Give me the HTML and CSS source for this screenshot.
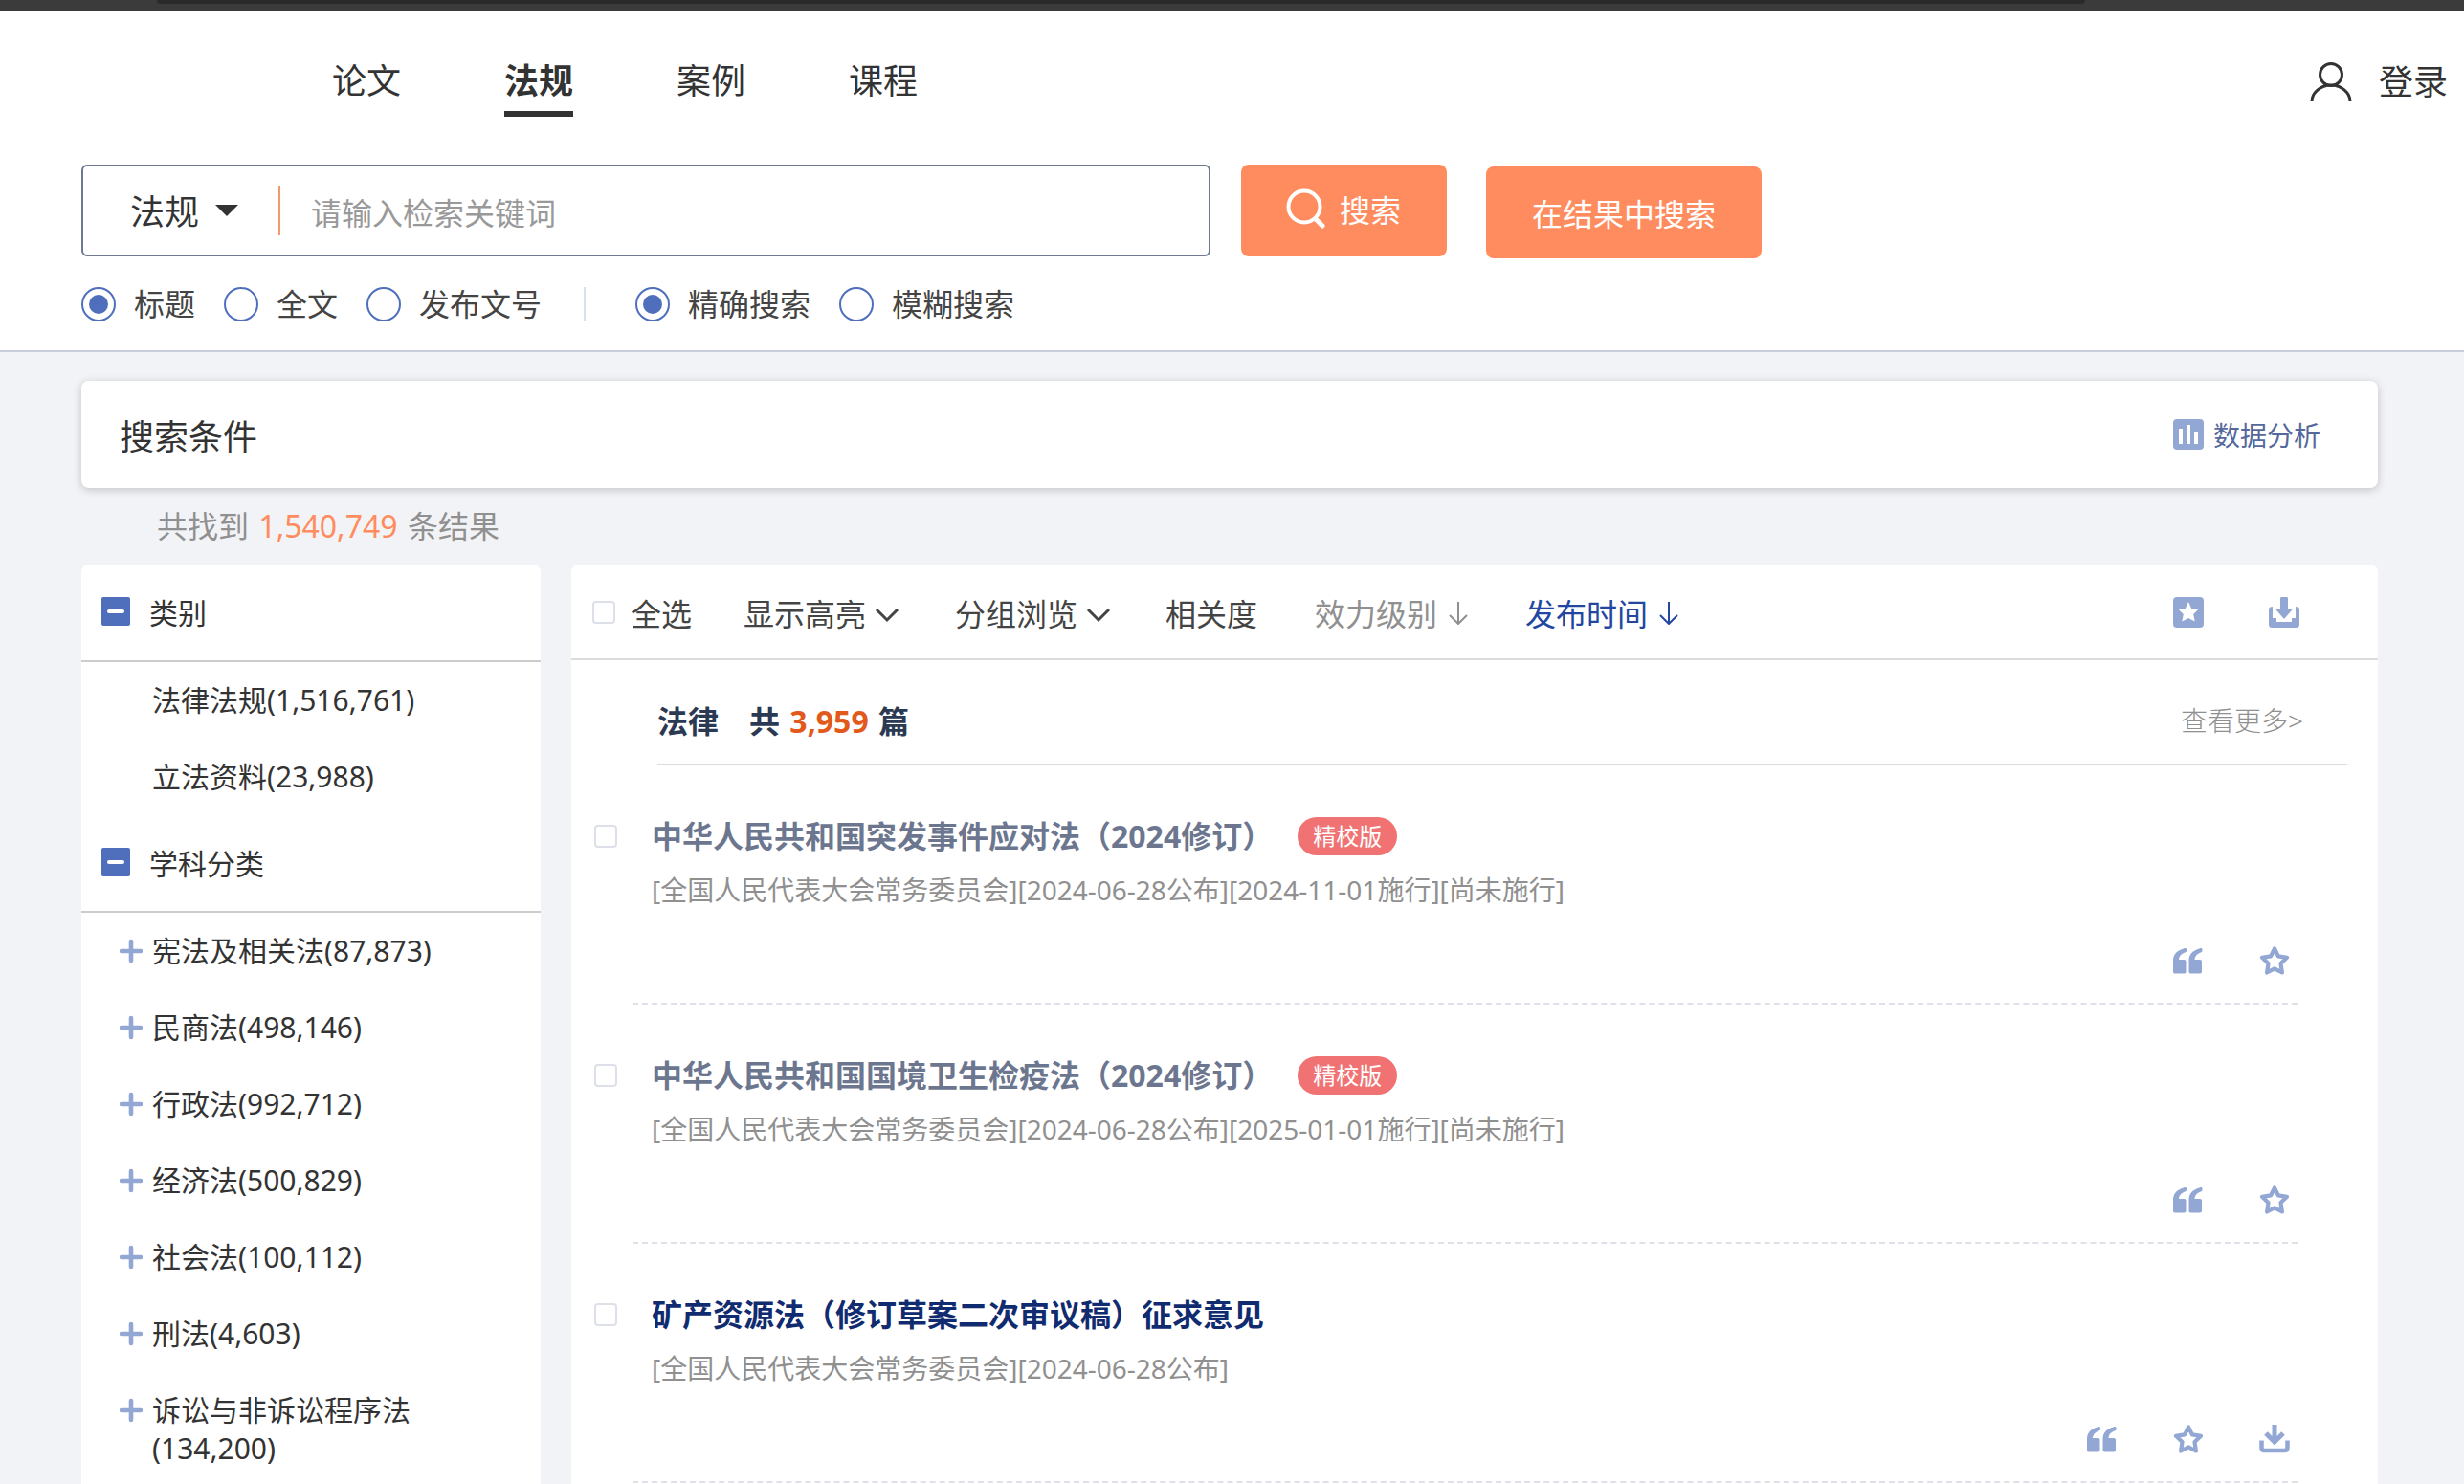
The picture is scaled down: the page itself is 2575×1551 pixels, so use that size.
FILE: index.html
```html
<!DOCTYPE html>
<html lang="zh-CN">
<head>
<meta charset="utf-8">
<meta name="viewport" content="width=device-width, initial-scale=1">
<title>法规</title>
<link rel="stylesheet" href="styles.css">
</head>
<body>
<svg class="sprite" aria-hidden="true">
  <symbol id="i-quote" viewBox="0 0 32 32"><path d="M11 3.500c2-1 3-.2 3 .8v1.200c0 1-.5 1.500-1.500 2C8.500 9 6.500 11 6 15h5.500c1.400 0 2 .7 2 2v10.500c0 1.300-.7 2-2 2H2c-1.300 0-2-.7-2-2V16C0 9.500 4 5.500 11 3.500zM27.500 3.500c2-1 3-.2 3 .8v1.200c0 1-.5 1.500-1.500 2C25 9 23 11 22.500 15H28c1.400 0 2 .7 2 2v10.500c0 1.300-.7 2-2 2h-9.500c-1.300 0-2-.7-2-2V16c0-6.500 4-10.500 11-12.500z"/></symbol>
  <symbol id="i-star" viewBox="0 0 32 32"><path d="M16 3.500l3.900 7.900 9.100 1.400-6.500 6.200 1.400 9.500-7.900-4.200-7.900 4.200 1.400-9.500L3 12.800l9.100-1.400z" fill="none" stroke="currentColor" stroke-width="4.200" stroke-linejoin="round"/></symbol>
  <symbol id="i-save" viewBox="0 0 32 32"><path d="M16 1v18M7 10l9 9 9-9" fill="none" stroke="currentColor" stroke-width="5"/><path d="M2.500 17.500V25c0 2 1 3 3 3h21c2 0 3-1 3-3v-7.500" fill="none" stroke="currentColor" stroke-width="4.500"/></symbol>
  <symbol id="i-plus" viewBox="0 0 24 24"><path d="M12 2v20M2 12h20" stroke="currentColor" stroke-width="4.600" stroke-linecap="round"/></symbol>
  <symbol id="i-minus" viewBox="0 0 30 30"><rect width="30" height="30" rx="2"/><path d="M8 15h14" stroke="#fff" stroke-width="4" stroke-linecap="round"/></symbol>
  <symbol id="i-chevron" viewBox="0 0 26 22"><path d="M2 8l11 11L24 8" fill="none" stroke="currentColor" stroke-width="3"/></symbol>
  <symbol id="i-arrow" viewBox="0 0 20 26"><path d="M10 2v23M1 16l9 9 9-9" fill="none" stroke="currentColor" stroke-width="2"/></symbol>
</svg>

<div class="window-edge"><div class="window-tab"></div></div>

<header class="header">
  <div class="topbar">
    <nav class="nav">
      <a class="nav-link" href="#">论文</a>
      <a class="nav-link active" href="#" aria-current="page">法规</a>
      <a class="nav-link" href="#">案例</a>
      <a class="nav-link" href="#">课程</a>
    </nav>
    <a class="login" href="#">
      <svg class="user-icon" viewBox="0 0 44 42" aria-hidden="true"><circle cx="22" cy="13" r="11.500" fill="none" stroke="currentColor" stroke-width="3"/><path d="M2 41c0-9 9-17 20-17s20 8 20 17" fill="none" stroke="currentColor" stroke-width="3"/></svg>
      登录
    </a>
  </div>

  <form class="search">
    <div class="search-row">
      <div class="search-box">
        <div class="picker">
          <select class="picker-select" aria-label="检索类型"><option>法规</option></select>
          <svg class="picker-caret" viewBox="0 0 24 12" aria-hidden="true"><path d="M0 0h24L12 12z"/></svg>
        </div>
        <input class="search-input" type="text" placeholder="请输入检索关键词" aria-label="检索关键词">
      </div>
      <button class="btn btn-search" type="submit">
        <svg class="search-icon" viewBox="0 0 42 42" aria-hidden="true"><circle cx="19" cy="19" r="16.500" fill="none" stroke="currentColor" stroke-width="4"/><path d="M32 33l6 6" stroke="currentColor" stroke-width="5" stroke-linecap="round"/></svg>
        搜索
      </button>
      <button class="btn btn-refine" type="button">在结果中搜索</button>
    </div>
    <div class="options">
      <label class="option"><input class="radio" type="radio" name="field" checked>标题</label>
      <label class="option"><input class="radio" type="radio" name="field">全文</label>
      <label class="option"><input class="radio" type="radio" name="field">发布文号</label>
      <span class="options-divider"></span>
      <label class="option"><input class="radio" type="radio" name="mode" checked>精确搜索</label>
      <label class="option"><input class="radio" type="radio" name="mode">模糊搜索</label>
    </div>
  </form>
</header>

<div class="page">
  <section class="conditions">
    <h1 class="conditions-title">搜索条件</h1>
    <a class="analysis" href="#">
      <svg class="icon" viewBox="0 0 32 32" aria-hidden="true"><rect width="32" height="32" rx="4"/><path d="M8 10v16M16 6v20M24 14v12" stroke="#fff" stroke-width="4"/></svg>
      数据分析
    </a>
  </section>

  <p class="summary">共找到 <span class="summary-count">1,540,749</span> 条结果</p>

  <div class="columns">
    <aside class="sidebar">
      <h2 class="facet-title"><svg class="minus" aria-hidden="true"><use href="#i-minus"/></svg>类别</h2>
      <ul class="facet-list">
        <li class="facet"><a class="facet-link" href="#">法律法规(1,516,761)</a></li>
        <li class="facet"><a class="facet-link" href="#">立法资料(23,988)</a></li>
      </ul>
      <h2 class="facet-title"><svg class="minus" aria-hidden="true"><use href="#i-minus"/></svg>学科分类</h2>
      <ul class="facet-list">
        <li class="facet"><svg class="plus" aria-hidden="true"><use href="#i-plus"/></svg><a class="facet-link" href="#">宪法及相关法(87,873)</a></li>
        <li class="facet"><svg class="plus" aria-hidden="true"><use href="#i-plus"/></svg><a class="facet-link" href="#">民商法(498,146)</a></li>
        <li class="facet"><svg class="plus" aria-hidden="true"><use href="#i-plus"/></svg><a class="facet-link" href="#">行政法(992,712)</a></li>
        <li class="facet"><svg class="plus" aria-hidden="true"><use href="#i-plus"/></svg><a class="facet-link" href="#">经济法(500,829)</a></li>
        <li class="facet"><svg class="plus" aria-hidden="true"><use href="#i-plus"/></svg><a class="facet-link" href="#">社会法(100,112)</a></li>
        <li class="facet"><svg class="plus" aria-hidden="true"><use href="#i-plus"/></svg><a class="facet-link" href="#">刑法(4,603)</a></li>
        <li class="facet"><svg class="plus" aria-hidden="true"><use href="#i-plus"/></svg><a class="facet-link" href="#">诉讼与非诉讼程序法<wbr>(134,200)</a></li>
      </ul>
    </aside>

    <main class="results">
      <div class="toolbar">
        <label class="select-all"><input class="check" type="checkbox">全选</label>
        <div class="tools">
          <button class="tool" type="button">显示高亮<svg class="chevron" aria-hidden="true"><use href="#i-chevron"/></svg></button>
          <button class="tool" type="button">分组浏览<svg class="chevron" aria-hidden="true"><use href="#i-chevron"/></svg></button>
        </div>
        <div class="sorts">
          <button class="tool" type="button">相关度</button>
          <button class="tool muted" type="button">效力级别<svg class="arrow" aria-hidden="true"><use href="#i-arrow"/></svg></button>
          <button class="tool current" type="button">发布时间<svg class="arrow" aria-hidden="true"><use href="#i-arrow"/></svg></button>
        </div>
        <div class="bulk">
          <button class="icon-btn" type="button" aria-label="批量收藏"><svg class="icon" viewBox="0 0 32 32"><rect width="32" height="32" rx="4"/><path d="M16 5l3.200 7 7.300.8-5.300 5.200 1.500 7.500-6.700-3.500-6.700 3.500 1.500-7.500-5.300-5.200 7.300-.8z" fill="#fff"/></svg></button>
          <button class="icon-btn" type="button" aria-label="批量下载"><svg class="icon" viewBox="0 0 32 32"><path d="M12 1.500C12 .5 12.500 0 13.500 0h5c1 0 1.500.5 1.500 1.500V12h5.500l-9 10.500h-1L6.500 12H12z"/><path d="M4 10v12h4v4h16v-4h4V10c2.500 0 4 1 4 3v15c0 3-1 4-4 4H4c-3 0-4-1-4-4V13c0-2 1.500-3 4-3z"/></svg></button>
        </div>
      </div>

      <div class="group-head">
        <h2 class="group-title"><span class="group-name">法律</span>共 <span class="group-count">3,959</span> 篇</h2>
        <a class="more" href="#">查看更多&gt;</a>
      </div>

      <article class="item">
        <input class="check" type="checkbox" aria-label="选择 突发事件应对法">
        <div class="item-body">
          <h3 class="item-title"><a class="item-link visited" href="#">中华人民共和国突发事件应对法（2024修订）</a><span class="badge">精校版</span></h3>
          <p class="item-meta">[全国人民代表大会常务委员会][2024-06-28公布][2024-11-01施行][尚未施行]</p>
          <div class="actions">
            <button class="icon-btn" type="button" aria-label="引用"><svg class="icon"><use href="#i-quote"/></svg></button>
            <button class="icon-btn" type="button" aria-label="收藏"><svg class="icon"><use href="#i-star"/></svg></button>
          </div>
        </div>
      </article>

      <article class="item">
        <input class="check" type="checkbox" aria-label="选择 国境卫生检疫法">
        <div class="item-body">
          <h3 class="item-title"><a class="item-link visited" href="#">中华人民共和国国境卫生检疫法（2024修订）</a><span class="badge">精校版</span></h3>
          <p class="item-meta">[全国人民代表大会常务委员会][2024-06-28公布][2025-01-01施行][尚未施行]</p>
          <div class="actions">
            <button class="icon-btn" type="button" aria-label="引用"><svg class="icon"><use href="#i-quote"/></svg></button>
            <button class="icon-btn" type="button" aria-label="收藏"><svg class="icon"><use href="#i-star"/></svg></button>
          </div>
        </div>
      </article>

      <article class="item">
        <input class="check" type="checkbox" aria-label="选择 矿产资源法">
        <div class="item-body">
          <h3 class="item-title"><a class="item-link" href="#">矿产资源法（修订草案二次审议稿）征求意见</a></h3>
          <p class="item-meta">[全国人民代表大会常务委员会][2024-06-28公布]</p>
          <div class="actions">
            <button class="icon-btn" type="button" aria-label="引用"><svg class="icon"><use href="#i-quote"/></svg></button>
            <button class="icon-btn" type="button" aria-label="收藏"><svg class="icon"><use href="#i-star"/></svg></button>
            <button class="icon-btn" type="button" aria-label="下载"><svg class="icon"><use href="#i-save"/></svg></button>
          </div>
        </div>
      </article>
    </main>
  </div>
</div>
</body>
</html>
```
FILE: styles.css
```css
* { box-sizing: border-box; }

body {
  margin: 0;
  background: #f2f3f6;
  color: #333;
  font-family: "Noto Sans", "Noto Sans CJK SC", sans-serif;
  font-size: 32px;
}

h1, h2, h3, p, ul { margin: 0; padding: 0; }
ul { list-style: none; }
a { color: inherit; text-decoration: none; }
button, input, select { font: inherit; color: inherit; }
button { border: 0; padding: 0; background: none; cursor: pointer; }
svg { display: block; flex: none; fill: currentColor; }

.sprite { display: none; }

/* Window edge above the page */
.window-edge {
  height: 12px;
  padding: 0 396px 0 164px;
  background: #3b3b3b;
}
.window-tab {
  height: 4px;
  border-radius: 0 0 6px 6px;
  background: #2a2a2a;
}

/* Header */
.header {
  background: #fff;
  border-bottom: 2px solid #c9cddb;
}
.topbar {
  display: flex;
  justify-content: space-between;
  padding: 38px 17px 0 347px;
  font-size: 36px;
  line-height: 62px;
}
.nav { display: flex; gap: 108px; }
.nav-link { padding-top: 4px; border-bottom: 6px solid transparent; }
.nav-link.active { border-color: #333; font-weight: 700; }
.login { display: flex; align-items: center; gap: 28px; }
.user-icon { width: 44px; height: 42px; }

.search { padding: 50px 85px 26px; }
.search-row { display: flex; align-items: flex-start; height: 96px; }
.search-box {
  display: flex;
  align-items: center;
  flex: 0 1 1180px;
  height: 96px;
  padding-left: 49px;
  border: 2px solid #6e7890;
  border-radius: 6px;
}
.picker {
  display: grid;
  align-items: center;
  width: 157px;
  height: 52px;
  border-right: 2px solid #f39a6c;
}
.picker-select {
  grid-area: 1 / 1;
  width: 130px;
  height: 52px;
  padding: 2px 0 0;
  border: 0;
  background: none;
  appearance: none;
  font-size: 36px;
}
.picker-caret {
  grid-area: 1 / 1;
  width: 24px;
  height: 12px;
  margin-left: 89px;
  pointer-events: none;
}
.search-input {
  flex: 1;
  min-width: 0;
  height: 80px;
  padding: 4px 32px 0;
  border: 0;
  outline: 0;
  background: none;
}
.search-input::placeholder { color: #999; opacity: 1; }
.btn {
  display: flex;
  align-items: center;
  height: 96px;
  padding: 0 48px;
  border-radius: 8px;
  background: #ff8c5e;
  color: #fff;
  white-space: nowrap;
}
.btn-search { gap: 14px; margin: 0 41px 0 32px; padding: 0 48px 4px 47px; }
.btn-refine { margin-top: 2px; }
.search-icon { width: 42px; height: 42px; }

.options {
  display: flex;
  align-items: center;
  gap: 30px;
  padding-top: 28px;
  color: #444;
  line-height: 44px;
}
.option { display: flex; align-items: center; gap: 19px; }
.radio {
  display: grid;
  place-content: center;
  width: 36px;
  height: 36px;
  margin: 0;
  border: 2px solid #4f6fbd;
  border-radius: 50%;
  appearance: none;
}
.radio:checked::before {
  content: "";
  width: 20px;
  height: 20px;
  border-radius: 50%;
  background: #4f6fbd;
}
.options-divider {
  width: 2px;
  height: 36px;
  margin: 0 22px 0 14px;
  background: #d5e2ea;
}

/* Page body */
.page { padding: 30px 90px 0 85px; }
.conditions {
  display: flex;
  align-items: center;
  justify-content: space-between;
  height: 112px;
  padding: 0 60px 0 40px;
  border-radius: 8px;
  background: #fff;
  box-shadow: 0 2px 10px rgba(0, 0, 0, .2);
}
.conditions-title { font-size: 36px; font-weight: 400; }
.analysis {
  display: flex;
  align-items: center;
  gap: 10px;
  color: #54689c;
  font-size: 28px;
}
.icon { width: 32px; height: 32px; }
.analysis .icon, .icon-btn, .plus { color: #93a7d4; }

.summary { padding-left: 79px; color: #909090; line-height: 80px; }
.summary-count { margin: 0 2px; color: #ff8c5e; }

.columns { display: grid; grid-template-columns: 480px 1fr; gap: 32px; }
.sidebar, .results { border-radius: 8px 8px 0 0; background: #fff; }

/* Facets */
.sidebar { font-size: 30px; }
.facet-title {
  display: flex;
  align-items: center;
  gap: 20px;
  height: 102px;
  padding: 0 0 2px 21px;
  border-bottom: 2px solid #ccc;
  font-size: 30px;
  font-weight: 400;
}
.minus { width: 30px; height: 30px; color: #4f6fbd; }
.facet {
  display: grid;
  grid-template-columns: 24px 1fr;
  column-gap: 10px;
  padding: 20px 40px;
  line-height: 40px;
}
.facet-list:last-child .facet:last-child { padding-bottom: 17px; }
.facet-link { grid-column: 2; }
.plus { width: 24px; height: 40px; }

/* Toolbar */
.toolbar {
  display: flex;
  align-items: center;
  height: 100px;
  padding: 2px 82px 0 22px;
  border-bottom: 2px solid #dcdcdc;
  color: #444;
}
.check {
  flex: none;
  width: 24px;
  height: 24px;
  margin: 0;
  border: 2px solid #dde0e8;
  border-radius: 4px;
  background: #fff;
  appearance: none;
}
.select-all { display: flex; align-items: center; gap: 16px; }
.tools, .sorts { display: flex; }
.tools { gap: 58px; margin-left: 54px; }
.sorts { gap: 60px; margin-left: 57px; }
.tool { display: flex; align-items: center; gap: 9px; white-space: nowrap; }
.sorts .tool { gap: 12px; }
.muted { color: #909090; }
.current { color: #2347a0; }
.chevron { width: 26px; height: 22px; }
.arrow { width: 20px; height: 26px; }
.bulk { display: flex; gap: 68px; margin-left: auto; }

/* Results */
.group-head {
  display: flex;
  align-items: center;
  justify-content: space-between;
  height: 110px;
  margin: 0 32px 0 90px;
  padding: 16px 46px 0 0;
  border-bottom: 2px solid #dcdcdc;
}
.group-title { color: #2b3a52; font-size: 32px; }
.group-name { margin-right: 32px; }
.group-count { margin: 0 2px; color: #e2591c; }
.more { color: #909090; font-size: 28px; font-weight: 300; }

.item {
  display: flex;
  height: 250px;
  margin: 0 84px 0 64px;
  padding-top: 50px;
  border-bottom: 2px dashed #dfe1e9;
}
.item .check { margin: 12px 36px 0 -40px; }
.item-body { flex: 1; }
.item-title {
  display: flex;
  align-items: center;
  gap: 26px;
  font-size: 32px;
  line-height: 48px;
}
.item-link { color: #112b70; }
.item-link.visited { color: #6c778f; }
.badge {
  padding: 0 16px;
  border-radius: 20px;
  background: #f07273;
  color: #fff;
  font-size: 24px;
  font-weight: 400;
  line-height: 40px;
}
.item-meta {
  margin-top: 12px;
  color: #909090;
  font-size: 28px;
  line-height: 40px;
}
.actions {
  display: flex;
  justify-content: flex-end;
  gap: 58px;
  margin-top: 38px;
  padding-right: 8px;
}
```
